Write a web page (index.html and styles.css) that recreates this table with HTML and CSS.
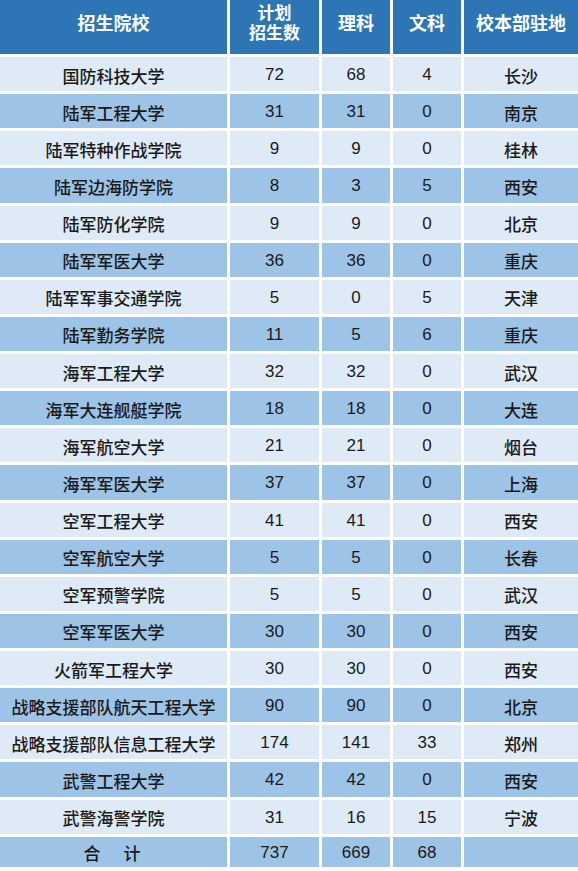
FILE: index.html
```html
<!DOCTYPE html>
<html lang="zh">
<head>
<meta charset="utf-8">
<link rel="stylesheet" href="styles.css">
</head>
<body>
<div class="table">
  <div class="th">招生院校</div>
  <div class="th stack"><span class="line">计划</span><span class="line">招生数</span></div>
  <div class="th">理科</div>
  <div class="th">文科</div>
  <div class="th">校本部驻地</div>

  <div class="td l">国防科技大学</div><div class="td l num">72</div><div class="td l num">68</div><div class="td l num">4</div><div class="td l">长沙</div>
  <div class="td d">陆军工程大学</div><div class="td d num">31</div><div class="td d num">31</div><div class="td d num">0</div><div class="td d">南京</div>
  <div class="td l">陆军特种作战学院</div><div class="td l num">9</div><div class="td l num">9</div><div class="td l num">0</div><div class="td l">桂林</div>
  <div class="td d">陆军边海防学院</div><div class="td d num">8</div><div class="td d num">3</div><div class="td d num">5</div><div class="td d">西安</div>
  <div class="td l">陆军防化学院</div><div class="td l num">9</div><div class="td l num">9</div><div class="td l num">0</div><div class="td l">北京</div>
  <div class="td d">陆军军医大学</div><div class="td d num">36</div><div class="td d num">36</div><div class="td d num">0</div><div class="td d">重庆</div>
  <div class="td l">陆军军事交通学院</div><div class="td l num">5</div><div class="td l num">0</div><div class="td l num">5</div><div class="td l">天津</div>
  <div class="td d">陆军勤务学院</div><div class="td d num">11</div><div class="td d num">5</div><div class="td d num">6</div><div class="td d">重庆</div>
  <div class="td l">海军工程大学</div><div class="td l num">32</div><div class="td l num">32</div><div class="td l num">0</div><div class="td l">武汉</div>
  <div class="td d">海军大连舰艇学院</div><div class="td d num">18</div><div class="td d num">18</div><div class="td d num">0</div><div class="td d">大连</div>
  <div class="td l">海军航空大学</div><div class="td l num">21</div><div class="td l num">21</div><div class="td l num">0</div><div class="td l">烟台</div>
  <div class="td d">海军军医大学</div><div class="td d num">37</div><div class="td d num">37</div><div class="td d num">0</div><div class="td d">上海</div>
  <div class="td l">空军工程大学</div><div class="td l num">41</div><div class="td l num">41</div><div class="td l num">0</div><div class="td l">西安</div>
  <div class="td d">空军航空大学</div><div class="td d num">5</div><div class="td d num">5</div><div class="td d num">0</div><div class="td d">长春</div>
  <div class="td l">空军预警学院</div><div class="td l num">5</div><div class="td l num">5</div><div class="td l num">0</div><div class="td l">武汉</div>
  <div class="td d">空军军医大学</div><div class="td d num">30</div><div class="td d num">30</div><div class="td d num">0</div><div class="td d">西安</div>
  <div class="td l">火箭军工程大学</div><div class="td l num">30</div><div class="td l num">30</div><div class="td l num">0</div><div class="td l">西安</div>
  <div class="td d">战略支援部队航天工程大学</div><div class="td d num">90</div><div class="td d num">90</div><div class="td d num">0</div><div class="td d">北京</div>
  <div class="td l">战略支援部队信息工程大学</div><div class="td l num">174</div><div class="td l num">141</div><div class="td l num">33</div><div class="td l">郑州</div>
  <div class="td d">武警工程大学</div><div class="td d num">42</div><div class="td d num">42</div><div class="td d num">0</div><div class="td d">西安</div>
  <div class="td l">武警海警学院</div><div class="td l num">31</div><div class="td l num">16</div><div class="td l num">15</div><div class="td l">宁波</div>
  <div class="td d total">合　计</div><div class="td d num">737</div><div class="td d num">669</div><div class="td d num">68</div><div class="td d"></div>
</div>
</body>
</html>
```
FILE: styles.css
```css
html, body {
  margin: 0;
  padding: 0;
  background: #ffffff;
}

body {
  width: 578px;
  height: 871px;
  overflow: hidden;
  font-family: "Liberation Sans", "Noto Sans CJK SC", sans-serif;
}

.table {
  display: grid;
  grid-template-columns: 227px 89px 68px 68px 1fr;
  grid-template-rows: 54px repeat(21, 34.14px) 30px;
  gap: 3px;
}

.th {
  background: #2e75b6;
  color: #ffffff;
  font-family: "Noto Sans CJK SC", sans-serif;
  font-weight: 700;
  font-size: 18px;
  line-height: 20px;
  display: flex;
  align-items: center;
  justify-content: center;
  text-align: center;
  padding-bottom: 10px;
  box-sizing: border-box;
}

.th.stack {
  flex-direction: column;
  padding-bottom: 11px;
}

.th .line {
  display: block;
  line-height: 20px;
  font-size: 17px;
}

.td {
  display: flex;
  align-items: center;
  justify-content: center;
  font-family: "Noto Sans CJK SC", sans-serif;
  font-weight: 500;
  font-size: 17px;
  color: #1a1a1a;
  white-space: nowrap;
  padding-top: 2px;
  box-sizing: border-box;
}

.td.num {
  font-family: "Liberation Sans", "Noto Sans CJK SC", sans-serif;
  font-weight: 400;
  font-size: 17px;
}

.l {
  background: #deebf7;
}

.d {
  background: #9dc3e6;
}

.total {
  letter-spacing: 3px;
}
```
